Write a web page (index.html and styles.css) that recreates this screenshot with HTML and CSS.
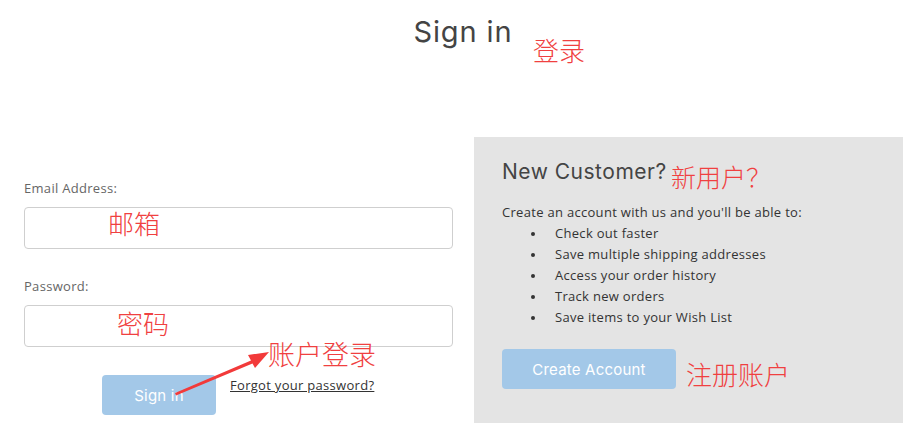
FILE: index.html
```html
<!DOCTYPE html>
<html lang="en">
<head>
<meta charset="utf-8">
<title>Sign in</title>
<link rel="stylesheet" href="styles.css">
</head>
<body>
<div class="page">
  <header class="page-head">
    <h1 class="page-title">Sign in</h1>
    <span class="note note-title">登录</span>
  </header>

  <main class="columns">
    <section class="login">
      <form class="login-form">
        <div class="field">
          <label class="field-label" for="email">Email Address:</label>
          <div class="input-wrap">
            <input class="field-input" id="email" type="email">
            <span class="note note-email">邮箱</span>
          </div>
        </div>
        <div class="field">
          <label class="field-label" for="pass">Password:</label>
          <div class="input-wrap">
            <input class="field-input" id="pass" type="password">
            <span class="note note-pass">密码</span>
          </div>
        </div>
        <div class="actions">
          <button class="btn btn-signin" type="button">Sign in</button>
          <a class="forgot" href="#">Forgot your password?</a>
          <span class="note note-login">账户登录</span>
          <svg class="arrow" width="110" height="60" viewBox="0 0 110 60" aria-hidden="true">
            <path d="M4 53 L80 20.5 L77 15 L98 12 L84 28 L81.5 23.5 L5 55.5 Z" fill="#f23a3a"/>
          </svg>
        </div>
      </form>
    </section>

    <section class="new-customer">
      <div class="nc-head">
        <h2 class="nc-title">New Customer?</h2>
        <span class="note note-new">新用户？</span>
      </div>
      <p class="nc-intro">Create an account with us and you'll be able to:</p>
      <ul class="nc-list">
        <li>Check out faster</li>
        <li>Save multiple shipping addresses</li>
        <li>Access your order history</li>
        <li>Track new orders</li>
        <li>Save items to your Wish List</li>
      </ul>
      <div class="nc-actions">
        <button class="btn btn-create" type="button">Create Account</button>
        <span class="note note-create">注册账户</span>
      </div>
    </section>
  </main>
</div>
</body>
</html>
```

FILE: styles.css
```css
* { box-sizing: border-box; }

html, body {
  margin: 0;
  padding: 0;
  background: #fff;
}

body {
  font-family: "Open Sans", "Liberation Sans", sans-serif;
  color: #333;
  width: 920px;
  height: 440px;
  overflow: hidden;
}

.page {
  position: relative;
}

.note {
  position: absolute;
  font-family: "Noto Sans CJK SC", sans-serif;
  font-weight: 200;
  font-size: 26px;
  line-height: 1;
  color: #f04040;
  white-space: nowrap;
}

/* Header */
.page-head {
  position: relative;
  height: 137px;
  display: flex;
  justify-content: center;
}

.page-title {
  margin: 14px 0 0 6px;
  font-family: "Inter", "Liberation Sans", sans-serif;
  font-weight: 400;
  font-size: 29px;
  letter-spacing: 0.9px;
  line-height: 36px;
  color: #444;
}

.note-title {
  left: 533px;
  top: 37px;
}

/* Columns */
.columns {
  display: grid;
  grid-template-columns: 429px 429px;
  column-gap: 21px;
  padding: 0 17px 0 24px;
}

/* Login */
.login-form {
  padding-top: 43px;
  display: flex;
  flex-direction: column;
}

.field {
  display: flex;
  flex-direction: column;
  margin-bottom: 29px;
}

.field + .field { margin-bottom: 28px; }

.field-label {
  font-size: 13px;
  letter-spacing: 0.3px;
  line-height: 16px;
  color: #666;
  margin-bottom: 11px;
}

.input-wrap { position: relative; }

.field-input {
  display: block;
  width: 100%;
  height: 42px;
  border: 1px solid #cfcfcf;
  border-radius: 4px;
  background: #fff;
  outline: none;
}

.note-email { left: 84px; top: 3px; }
.note-pass { left: 93px; top: 5px; }

.actions {
  position: relative;
  display: flex;
  align-items: flex-start;
  padding-left: 78px;
}

.btn {
  border: 0;
  border-radius: 4px;
  background: #a3c8e8;
  color: #fff;
  font-family: "Inter", "Liberation Sans", sans-serif;
  font-size: 15px;
  letter-spacing: 0.2px;
  font-weight: 400;
  height: 40px;
  cursor: pointer;
}

.btn-signin {
  width: 114px;
}

.forgot {
  margin: 1px 0 0 14px;
  font-size: 13px;
  letter-spacing: 0.3px;
  line-height: 18px;
  color: #333;
  text-decoration: underline;
}

.note-login {
  left: 244px;
  top: -35px;
  font-size: 27px;
}

.arrow {
  position: absolute;
  left: 147px;
  top: -35px;
}

/* New customer panel */
.new-customer {
  background: #e4e4e4;
  height: 286px;
  padding: 22px 28px 0 28px;
}

.nc-head {
  position: relative;
}

.nc-title {
  margin: 0;
  font-family: "Inter", "Liberation Sans", sans-serif;
  font-weight: 400;
  font-size: 21px;
  letter-spacing: 0.5px;
  line-height: 26px;
  color: #444;
}

.note-new {
  left: 169px;
  top: 5px;
  font-size: 25px;
}

.nc-intro {
  margin: 18px 0 0 0;
  font-size: 13px;
  letter-spacing: 0.3px;
  line-height: 18px;
  color: #333;
}

.nc-list {
  list-style: none;
  margin: 2px 0 0 0;
  padding-left: 53px;
  font-size: 13px;
  letter-spacing: 0.3px;
  line-height: 21px;
  color: #333;
}

.nc-list li {
  position: relative;
}

.nc-list li::before {
  content: "";
  position: absolute;
  left: -24px;
  top: 9px;
  width: 4px;
  height: 4px;
  border-radius: 50%;
  background: #333;
}

.nc-actions {
  position: relative;
  margin-top: 21px;
}

.btn-create {
  width: 174px;
}

.note-create {
  left: 184px;
  top: 12px;
}
```
